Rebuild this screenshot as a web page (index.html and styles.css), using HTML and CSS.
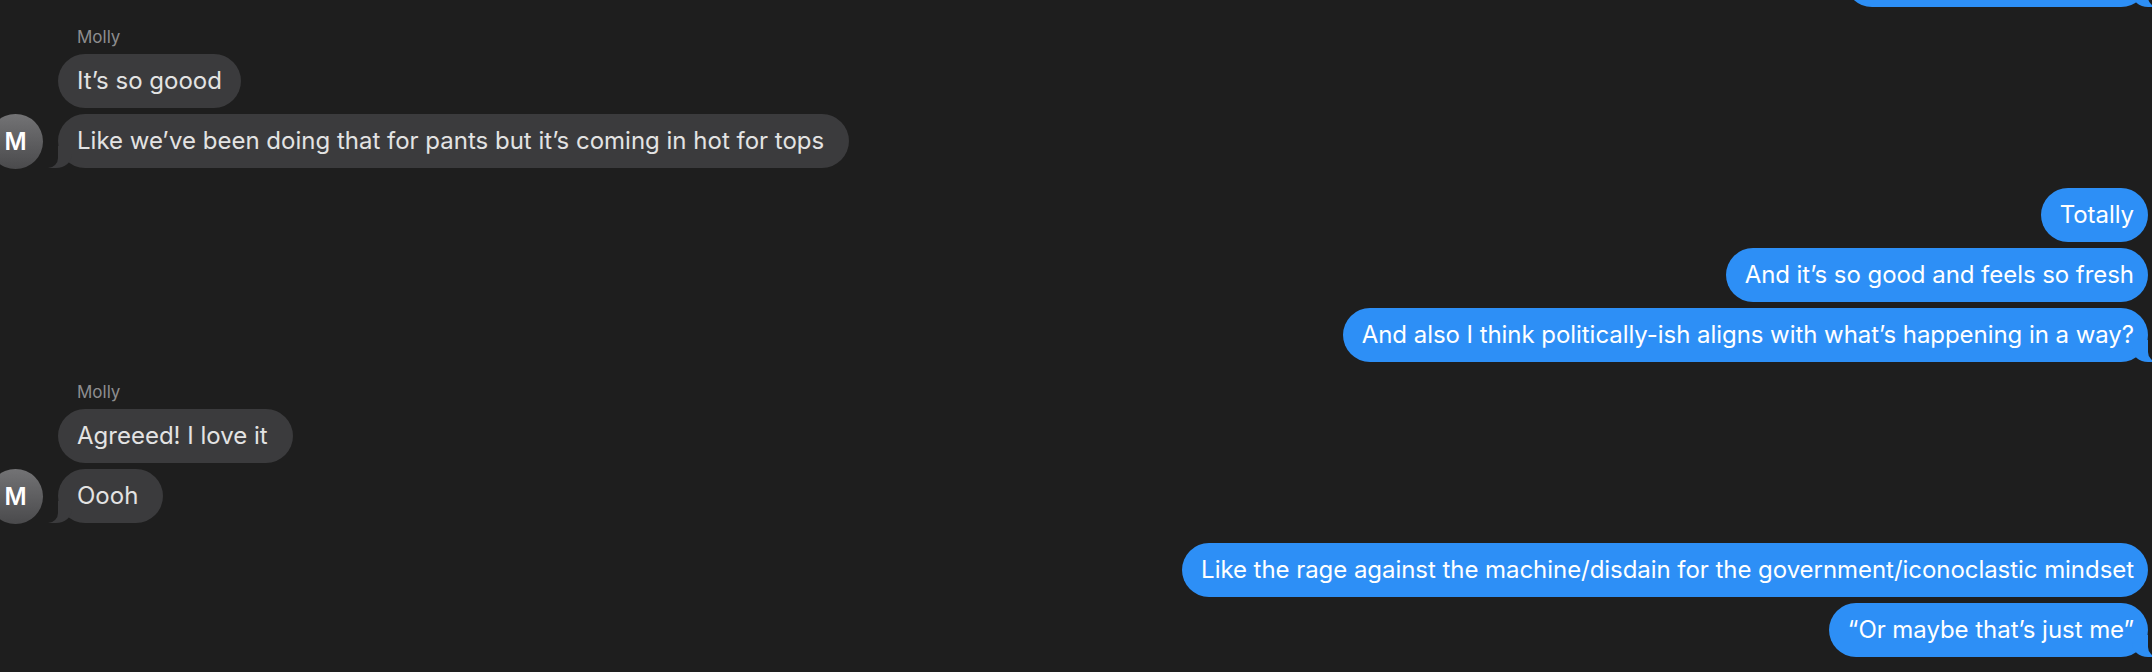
FILE: index.html
```html
<!DOCTYPE html>
<html lang="en">
<head>
<meta charset="utf-8">
<title>Messages</title>
<link rel="stylesheet" href="styles.css">
</head>
<body>
<div class="chat">
  <div class="group out">
    <div class="bubble out tail partial"></div>
  </div>

  <div class="group in">
    <div class="avatar">M</div>
    <div class="stack">
      <div class="sender">Molly</div>
      <div class="bubble in snug">It’s so goood</div>
      <div class="bubble in tail">Like we’ve been doing that for pants but it’s coming in hot for tops</div>
    </div>
  </div>

  <div class="group out">
    <div class="bubble out">Totally</div>
    <div class="bubble out">And it’s so good and feels so fresh</div>
    <div class="bubble out tail">And also I think politically-ish aligns with what’s happening in a way?</div>
  </div>

  <div class="group in">
    <div class="avatar">M</div>
    <div class="stack">
      <div class="sender">Molly</div>
      <div class="bubble in">Agreeed! I love it</div>
      <div class="bubble in tail">Oooh</div>
    </div>
  </div>

  <div class="group out">
    <div class="bubble out">Like the rage against the machine/disdain for the government/iconoclastic mindset</div>
    <div class="bubble out tail">“Or maybe that’s just me”</div>
  </div>
</div>
</body>
</html>
```
FILE: styles.css
```css
html, body {
  margin: 0;
  padding: 0;
  background: #1e1e1e;
  height: 672px;
  overflow: hidden;
}

body {
  font-family: Inter, "Noto Sans", "Liberation Sans", sans-serif;
}

.chat {
  display: flex;
  flex-direction: column;
  gap: 20px;
  margin-top: -47px;
  padding-right: 4px;
}

.group {
  display: flex;
}

.group.out {
  flex-direction: column;
  align-items: flex-end;
  gap: 6px;
}

.group.in {
  align-items: flex-end;
  gap: 15px;
}

.stack {
  display: flex;
  flex-direction: column;
  align-items: flex-start;
  gap: 6px;
}

.sender {
  font-size: 17px;
  line-height: 21px;
  color: #8d8d8f;
  padding-left: 19px;
}

.avatar {
  width: 55px;
  height: 55px;
  margin-left: -12px;
  margin-bottom: -1px;
  border-radius: 50%;
  background: linear-gradient(#737375, #4a4a4c);
  color: #ffffff;
  font-size: 24px;
  font-weight: 600;
  display: flex;
  align-items: center;
  justify-content: center;
  flex-shrink: 0;
}

.bubble {
  position: relative;
  height: 54px;
  line-height: 53px;
  border-radius: 27px;
  font-size: 24px;
  white-space: nowrap;
}

.bubble.in {
  padding: 0 25px 0 19px;
  background: #3b3b3d;
  color: #e3e3e3;
}

.bubble.in.snug {
  padding-right: 19px;
}

.bubble.out {
  padding: 0 14px 0 19px;
  letter-spacing: -0.05px;
  background: #2d8ff6;
  color: #ffffff;
}

.bubble.partial {
  width: 270px;
}

/* tails */
.bubble.tail::before,
.bubble.tail::after {
  content: "";
  position: absolute;
  bottom: 0;
  height: 22px;
}

.bubble.in.tail::before {
  left: -10px;
  width: 24px;
  background: #3b3b3d;
  border-bottom-right-radius: 16px 14px;
}

.bubble.in.tail::after {
  left: -14px;
  width: 14px;
  background: #1e1e1e;
  border-bottom-right-radius: 10px;
}

.bubble.out.tail::before {
  right: -8px;
  width: 24px;
  background: #2d8ff6;
  border-bottom-left-radius: 16px 14px;
}

.bubble.out.tail::after {
  right: -12px;
  width: 12px;
  background: #1e1e1e;
  border-bottom-left-radius: 10px;
}
```
